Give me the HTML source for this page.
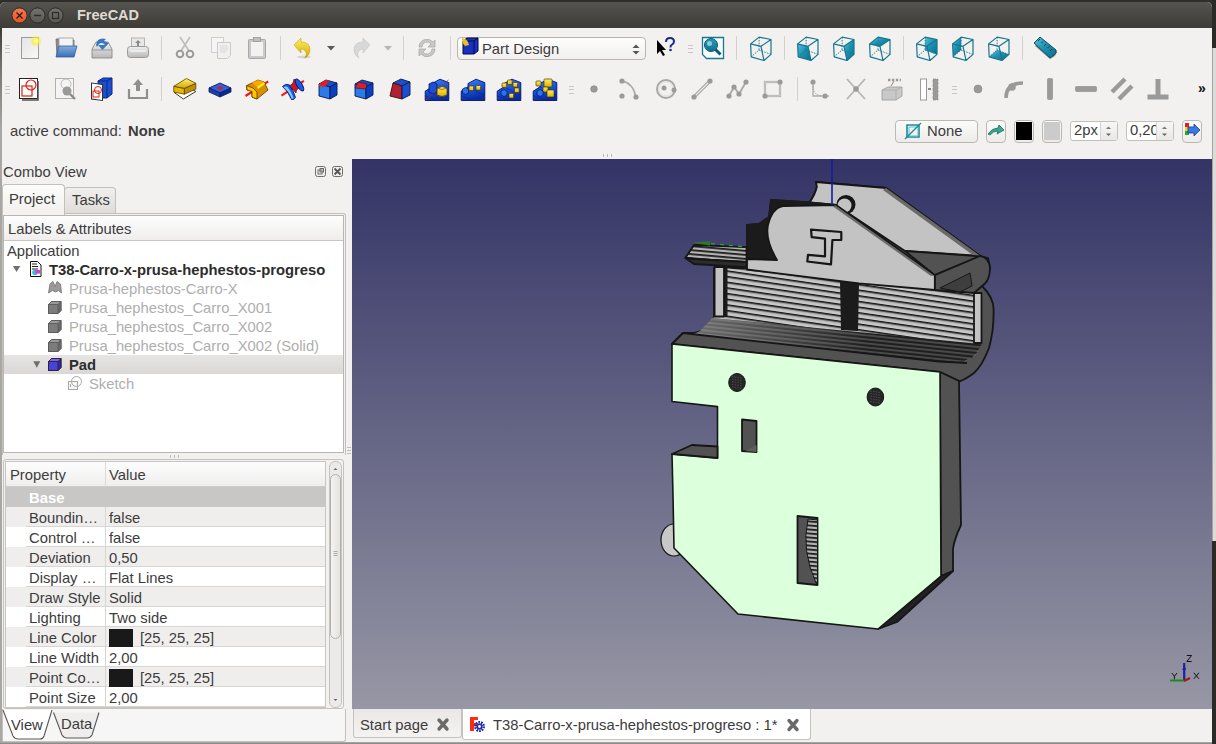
<!DOCTYPE html><html><head><meta charset="utf-8"><style>
*{box-sizing:border-box;margin:0;padding:0}
html,body{width:1216px;height:744px;overflow:hidden;background:#2f2e2b;font-family:"Liberation Sans",sans-serif;color:#3c3c3c}
div,span,svg{position:absolute;display:block}
.t{white-space:nowrap;font-size:14.8px;line-height:19.5px}
.b{font-weight:bold}
.g{color:#aeaeae}
.sep{width:1px;background:#d3d1ce}
.grip{width:5px;height:8px;border-top:1px solid #c9c7c4;border-bottom:1px solid #c9c7c4}
.grip:after{content:"";position:absolute;left:0;top:2px;width:5px;height:1px;background:#c9c7c4}
</style></head><body>
<div style="left:0;top:2px;width:1212px;height:742px;background:#f2f1f0;border-radius:5px 5px 0 0"></div>
<div style="left:0;top:28px;width:2px;height:716px;background:linear-gradient(#3c3b37 0px,#77756f 40px,#a9a7a3 100px,#a9a7a3 716px)"></div>
<div style="left:0;top:2px;width:1212px;height:26px;background:linear-gradient(#55544f,#3c3b37);border-radius:5px 5px 0 0"></div>
<svg style="left:0;top:0" width="80" height="30"><defs><linearGradient id="cg" x1="0" y1="0" x2="0" y2="1"><stop offset="0" stop-color="#f47b55"/><stop offset="1" stop-color="#e8531f"/></linearGradient><linearGradient id="gg" x1="0" y1="0" x2="0" y2="1"><stop offset="0" stop-color="#75746f"/><stop offset="1" stop-color="#57564f"/></linearGradient></defs><circle cx="19.5" cy="15.5" r="7.6" fill="url(#cg)" stroke="#2c2b28" stroke-width="1"/><path d="M16.5 12.5l6 6M22.5 12.5l-6 6" stroke="#2a1a10" stroke-width="1.3"/><circle cx="37.5" cy="15.5" r="7.6" fill="url(#gg)" stroke="#2c2b28" stroke-width="1"/><path d="M34 15.5h7" stroke="#2e2d2a" stroke-width="1.5"/><circle cx="55.5" cy="15.5" r="7.6" fill="url(#gg)" stroke="#2c2b28" stroke-width="1"/><rect x="52.5" y="12.5" width="6" height="6" fill="none" stroke="#2e2d2a" stroke-width="1.3"/></svg>
<span class="t b" style="left:77px;top:6px;color:#dfdbd2;font-size:14.5px">FreeCAD</span>
<div class="grip" style="left:5px;top:45px"></div>
<div class="grip" style="left:5px;top:86px"></div>
<div class="grip" style="left:688px;top:45px"></div>
<div class="grip" style="left:569px;top:86px"></div>
<div class="grip" style="left:952px;top:86px"></div>
<div class="sep" style="left:161px;top:36px;height:24px"></div>
<div class="sep" style="left:280px;top:36px;height:24px"></div>
<div class="sep" style="left:403px;top:36px;height:24px"></div>
<div class="sep" style="left:450px;top:36px;height:24px"></div>
<div class="sep" style="left:736px;top:36px;height:24px"></div>
<div class="sep" style="left:784px;top:36px;height:24px"></div>
<div class="sep" style="left:903px;top:36px;height:24px"></div>
<div class="sep" style="left:1022px;top:36px;height:24px"></div>
<div class="sep" style="left:161px;top:77px;height:24px"></div>
<div class="sep" style="left:797px;top:77px;height:24px"></div>
<div style="left:457px;top:37px;width:189px;height:23px;border:1px solid #b9b5ae;border-radius:4px;background:linear-gradient(#fdfdfc,#f1f0ee)"></div>
<span class="t" style="left:482px;top:40px">Part Design</span>
<svg style="left:630px;top:42px" width="12" height="14"><path d="M2.5 6h7l-3.5-3.5z" fill="#555"/><path d="M2.5 9h7l-3.5 3.5z" fill="#555"/></svg>
<span class="t" style="left:10px;top:122px">active command:</span>
<span class="t b" style="left:128px;top:122px">None</span>
<div style="left:895px;top:120px;width:83px;height:23px;border:1px solid #bcb8b2;border-radius:4px;background:linear-gradient(#fbfbfa,#ecebe9)"></div>
<span class="t" style="left:927px;top:122px">None</span>
<div style="left:986px;top:120px;width:20px;height:23px;border:1px solid #bcb8b2;border-radius:4px;background:linear-gradient(#fbfbfa,#ecebe9)"></div>
<div style="left:1014px;top:120px;width:20px;height:23px;border:1px solid #bcb8b2;border-radius:4px;background:linear-gradient(#fbfbfa,#ecebe9)"></div>
<div style="left:1016px;top:122px;width:16px;height:18px;background:#000"></div>
<div style="left:1042px;top:120px;width:20px;height:23px;border:1px solid #bcb8b2;border-radius:4px;background:linear-gradient(#fbfbfa,#ecebe9)"></div>
<div style="left:1044px;top:122px;width:16px;height:18px;background:#cbcbcb"></div>
<div style="left:1070px;top:121px;width:48px;height:20px;border:1px solid #c3bfb9;border-radius:3px;background:#fff"></div><div style="left:1100px;top:122px;width:17px;height:18px;border-left:1px solid #d6d3cf;background:linear-gradient(#f7f7f6,#e9e8e6)"></div><svg style="left:1103px;top:124px" width="11" height="14"><path d="M3 5h5l-2.5-2.5z" fill="#777"/><path d="M3 9.5h5l-2.5 2.5z" fill="#666"/></svg><span class="t" style="left:1074px;top:121px;width:26px;overflow:hidden">2px</span>
<div style="left:1126px;top:121px;width:48px;height:20px;border:1px solid #c3bfb9;border-radius:3px;background:#fff"></div><div style="left:1156px;top:122px;width:17px;height:18px;border-left:1px solid #d6d3cf;background:linear-gradient(#f7f7f6,#e9e8e6)"></div><svg style="left:1159px;top:124px" width="11" height="14"><path d="M3 5h5l-2.5-2.5z" fill="#777"/><path d="M3 9.5h5l-2.5 2.5z" fill="#666"/></svg><span class="t" style="left:1130px;top:121px;width:26px;overflow:hidden">0,20</span>
<div style="left:1182px;top:120px;width:20px;height:23px;border:1px solid #bcb8b2;border-radius:4px;background:linear-gradient(#fbfbfa,#ecebe9)"></div>
<span class="t" style="left:3px;top:163px">Combo View</span>
<svg style="left:314px;top:165px" width="30" height="13"><rect x="1.5" y="1.5" width="10" height="10" rx="2" fill="none" stroke="#6e6c68"/><rect x="4" y="5" width="4" height="4" fill="none" stroke="#6e6c68"/><rect x="6" y="3.5" width="3.5" height="3.5" fill="none" stroke="#6e6c68"/><rect x="18.5" y="1.5" width="10" height="10" rx="2" fill="none" stroke="#6e6c68"/><path d="M20.5 3.5l6 6M26.5 3.5l-6 6" stroke="#5a5854" stroke-width="2"/></svg>
<div style="left:2px;top:184px;width:63px;height:31px;border:1px solid #c3bfba;border-bottom:none;border-radius:4px 4px 0 0;background:linear-gradient(#fcfcfb,#f1f0ef)"></div>
<span class="t" style="left:9px;top:190px">Project</span>
<div style="left:64px;top:187px;width:52px;height:27px;border:1px solid #c3bfba;border-bottom:none;border-radius:4px 4px 0 0;background:linear-gradient(#f0efed,#dedcd9)"></div>
<span class="t" style="left:72px;top:190.5px">Tasks</span>
<div style="left:2px;top:213px;width:344px;height:242px;border:1px solid #c4c0bb;border-bottom:none;border-radius:0 3px 0 0"></div>
<div style="left:3px;top:215px;width:341px;height:238px;border:1px solid #b9b5b0;background:#fff"></div>
<div style="left:3px;top:213px;width:61px;height:2px;background:#f3f2f1"></div>
<div style="left:4px;top:216px;width:339px;height:25px;border-bottom:1px solid #c9c6c2;background:linear-gradient(#fdfdfd,#efeeed)"></div>
<span class="t" style="left:8px;top:220px">Labels &amp; Attributes</span>
<div style="left:4px;top:355px;width:339px;height:19px;background:linear-gradient(#e6e5e3,#d9d8d6)"></div>
<span class="t " style="left:7px;top:242px;">Application</span>
<span class="t b" style="left:49px;top:261px;color:#2c2c2c">T38-Carro-x-prusa-hephestos-progreso</span>
<span class="t g" style="left:69px;top:280px;">Prusa-hephestos-Carro-X</span>
<span class="t g" style="left:69px;top:299px;">Prusa_hephestos_Carro_X001</span>
<span class="t g" style="left:69px;top:318px;">Prusa_hephestos_Carro_X002</span>
<span class="t g" style="left:69px;top:337px;">Prusa_hephestos_Carro_X002 (Solid)</span>
<span class="t b" style="left:69px;top:356px;color:#2c2c2c">Pad</span>
<span class="t g" style="left:89px;top:375px;">Sketch</span>
<svg style="left:10px;top:262px" width="40" height="120"><path d="M2.8 4h7.5l-3.75 6z" fill="#6f6f6f"/><path d="M23.3 99.3h7l-3.5 6.4z" fill="#6f6f6f"/></svg>
<svg style="left:0;top:0" width="100" height="400"><path d="M30.5 261.5h7l3.5 3.5v11.5h-10.5z" fill="#fff" stroke="#111"/><path d="M32 264h5M32 266.5h6M32 269h6" stroke="#222"/><circle cx="35" cy="272.5" r="2.8" fill="#30c0d8"/><rect x="35.5" y="270" width="4.5" height="3.5" fill="#d040e0"/><path d="M48.5 293l1.5-9 3-2.5 2 5 2-5 3.5 2.5 1 9-3-2.5-3 1.5-3-1.5z" fill="#9a9a9a" stroke="#707070" stroke-width="0.8"/><path d="M48.5 304.5l3-3h9.5v9l-3 3h-9.5z" fill="#7c7c7c" stroke="#5a5a5a" stroke-width="0.9"/><path d="M48.5 304.5l3-3h9.5l-3 3z" fill="#9a9a9a"/><path d="M58 304.5l3-3v9l-3 3z" fill="#6a6a6a"/><path d="M48.5 304.5l3-3h9.5v9l-3 3h-9.5zM48.5 304.5h9.5v9M58 304.5l3-3" fill="none" stroke="#5a5a5a" stroke-width="0.9"/><path d="M48.5 323.5l3-3h9.5v9l-3 3h-9.5z" fill="#7c7c7c" stroke="#5a5a5a" stroke-width="0.9"/><path d="M48.5 323.5l3-3h9.5l-3 3z" fill="#9a9a9a"/><path d="M58 323.5l3-3v9l-3 3z" fill="#6a6a6a"/><path d="M48.5 323.5l3-3h9.5v9l-3 3h-9.5zM48.5 323.5h9.5v9M58 323.5l3-3" fill="none" stroke="#5a5a5a" stroke-width="0.9"/><path d="M48.5 342.5l3-3h9.5v9l-3 3h-9.5z" fill="#7c7c7c" stroke="#5a5a5a" stroke-width="0.9"/><path d="M48.5 342.5l3-3h9.5l-3 3z" fill="#9a9a9a"/><path d="M58 342.5l3-3v9l-3 3z" fill="#6a6a6a"/><path d="M48.5 342.5l3-3h9.5v9l-3 3h-9.5zM48.5 342.5h9.5v9M58 342.5l3-3" fill="none" stroke="#5a5a5a" stroke-width="0.9"/><path d="M48.5 361.5l3-3h9.5v9l-3 3h-9.5z" fill="#4444d8" stroke="#3a1a30" stroke-width="0.9"/><path d="M48.5 361.5l3-3h9.5l-3 3z" fill="#6a6ae8"/><path d="M58 361.5l3-3v9l-3 3z" fill="#2a2ab0"/><path d="M48.5 361.5l3-3h9.5v9l-3 3h-9.5zM48.5 361.5h9.5v9M58 361.5l3-3" fill="none" stroke="#3a1a30" stroke-width="0.9"/><rect x="68.5" y="381.5" width="9" height="8" fill="#f6f6f6" stroke="#a8a8a8"/><circle cx="76.5" cy="381.5" r="5" fill="none" stroke="#a8a8a8"/><path d="M70.5 384v3" stroke="#a8a8a8"/></svg>
<div style="left:170px;top:455px;width:9px;height:3px;border-left:1px solid #bbb;border-right:1px solid #bbb"></div><div style="left:174px;top:455px;width:1px;height:3px;background:#bbb"></div>
<div style="left:603px;top:154px;width:9px;height:3px;border-left:1px solid #bbb;border-right:1px solid #bbb"></div><div style="left:607px;top:154px;width:1px;height:3px;background:#bbb"></div>
<div style="left:347px;top:447px;width:4px;height:7px;border-top:1px solid #bbb;border-bottom:1px solid #bbb"></div><div style="left:347px;top:450px;width:4px;height:1px;background:#bbb"></div>
<div style="left:3px;top:459px;width:341px;height:250px;border:1px solid #c6c2bd;border-radius:3px;background:#f2f1f0"></div>
<div style="left:5px;top:461px;width:321px;height:247px;border:1px solid #c9c6c2;background:#fff"></div>
<div style="left:6px;top:462px;width:319px;height:25px;border-bottom:1px solid #cfccc8;background:linear-gradient(#fdfdfd,#efeeed)"></div>
<div style="left:105px;top:462px;width:1px;height:25px;background:#dcdad6"></div>
<span class="t" style="left:10px;top:466px">Property</span>
<span class="t" style="left:109px;top:466px">Value</span>
<div style="left:6px;top:487px;width:319px;height:20px;background:#c8c7c6"></div>
<span class="t b" style="left:29px;top:489px;color:#fff">Base</span>
<div style="left:6px;top:507px;width:319px;height:20px;background:#efeeed"></div>
<div style="left:26px;top:526px;width:299px;height:1px;background:#d8d6d3"></div>
<div style="left:105px;top:507px;width:1px;height:20px;background:#d8d6d3"></div>
<span class="t" style="left:29px;top:509px">Boundin…</span>
<span class="t" style="left:109px;top:509px">false</span>
<div style="left:6px;top:527px;width:319px;height:20px;background:#ffffff"></div>
<div style="left:26px;top:546px;width:299px;height:1px;background:#d8d6d3"></div>
<div style="left:105px;top:527px;width:1px;height:20px;background:#d8d6d3"></div>
<span class="t" style="left:29px;top:529px">Control …</span>
<span class="t" style="left:109px;top:529px">false</span>
<div style="left:6px;top:547px;width:319px;height:20px;background:#efeeed"></div>
<div style="left:26px;top:566px;width:299px;height:1px;background:#d8d6d3"></div>
<div style="left:105px;top:547px;width:1px;height:20px;background:#d8d6d3"></div>
<span class="t" style="left:29px;top:549px">Deviation</span>
<span class="t" style="left:109px;top:549px">0,50</span>
<div style="left:6px;top:567px;width:319px;height:20px;background:#ffffff"></div>
<div style="left:26px;top:586px;width:299px;height:1px;background:#d8d6d3"></div>
<div style="left:105px;top:567px;width:1px;height:20px;background:#d8d6d3"></div>
<span class="t" style="left:29px;top:569px">Display …</span>
<span class="t" style="left:109px;top:569px">Flat Lines</span>
<div style="left:6px;top:587px;width:319px;height:20px;background:#efeeed"></div>
<div style="left:26px;top:606px;width:299px;height:1px;background:#d8d6d3"></div>
<div style="left:105px;top:587px;width:1px;height:20px;background:#d8d6d3"></div>
<span class="t" style="left:29px;top:589px">Draw Style</span>
<span class="t" style="left:109px;top:589px">Solid</span>
<div style="left:6px;top:607px;width:319px;height:20px;background:#ffffff"></div>
<div style="left:26px;top:626px;width:299px;height:1px;background:#d8d6d3"></div>
<div style="left:105px;top:607px;width:1px;height:20px;background:#d8d6d3"></div>
<span class="t" style="left:29px;top:609px">Lighting</span>
<span class="t" style="left:109px;top:609px">Two side</span>
<div style="left:6px;top:627px;width:319px;height:20px;background:#efeeed"></div>
<div style="left:26px;top:646px;width:299px;height:1px;background:#d8d6d3"></div>
<div style="left:105px;top:627px;width:1px;height:20px;background:#d8d6d3"></div>
<span class="t" style="left:29px;top:629px">Line Color</span>
<div style="left:109px;top:629px;width:24px;height:18px;background:#191919"></div>
<span class="t" style="left:140px;top:629px">[25, 25, 25]</span>
<div style="left:6px;top:647px;width:319px;height:20px;background:#ffffff"></div>
<div style="left:26px;top:666px;width:299px;height:1px;background:#d8d6d3"></div>
<div style="left:105px;top:647px;width:1px;height:20px;background:#d8d6d3"></div>
<span class="t" style="left:29px;top:649px">Line Width</span>
<span class="t" style="left:109px;top:649px">2,00</span>
<div style="left:6px;top:667px;width:319px;height:20px;background:#efeeed"></div>
<div style="left:26px;top:686px;width:299px;height:1px;background:#d8d6d3"></div>
<div style="left:105px;top:667px;width:1px;height:20px;background:#d8d6d3"></div>
<span class="t" style="left:29px;top:669px">Point Co…</span>
<div style="left:109px;top:669px;width:24px;height:18px;background:#191919"></div>
<span class="t" style="left:140px;top:669px">[25, 25, 25]</span>
<div style="left:6px;top:687px;width:319px;height:20px;background:#ffffff"></div>
<div style="left:26px;top:706px;width:299px;height:1px;background:#d8d6d3"></div>
<div style="left:105px;top:687px;width:1px;height:20px;background:#d8d6d3"></div>
<span class="t" style="left:29px;top:689px">Point Size</span>
<span class="t" style="left:109px;top:689px">2,00</span>
<div style="left:329px;top:461px;width:13px;height:247px;border:1px solid #c6c2bd;border-radius:6px;background:#ebeae8"></div>
<div style="left:330px;top:474px;width:11px;height:165px;border:1px solid #b4b0aa;border-radius:6px;background:linear-gradient(90deg,#f4f3f2,#e4e2df)"></div>
<svg style="left:329px;top:461px" width="13" height="247"><path d="M4.5 9l2-2 2 2z" fill="#666"/><path d="M4.5 238l2 2 2-2z" fill="#666"/><path d="M4.5 90.5h4M4.5 92.5h4M4.5 94.5h4" stroke="#9a9a9a" stroke-width="0.8"/></svg>
<div style="left:2px;top:709px;width:344px;height:33px;border:1px solid #c4c0bb;border-top:none;border-radius:0 0 3px 0;background:#f6f6f6;z-index:0"></div>
<svg style="left:0;top:707px" width="110" height="37"><path d="M3 3 L13 29 Q15 32 18 32 H40 Q43 32 44 29 L52 3" fill="#fff" stroke="#5a5854" stroke-width="1.1"/><path d="M53.5 5.5 L62 28 Q64 31 67 31 H87 Q90 31 92 28 L99 5.5" fill="#efeeed" stroke="#5a5854" stroke-width="1.1"/></svg>
<span class="t" style="left:11px;top:716px">View</span>
<span class="t" style="left:61px;top:715px">Data</span>
<div style="left:352px;top:159px;width:860px;height:550px;background:linear-gradient(#333366,#9797a5)"></div>
<svg style="left:352px;top:159px" width="860" height="550" viewBox="352 159 860 550"><defs>
<pattern id="stripes" patternUnits="userSpaceOnUse" width="400" height="5.6" patternTransform="rotate(8.3)">
<rect width="400" height="5.6" fill="#c8c8c8"/><rect y="0" width="400" height="1.7" fill="#161616"/><rect y="1.7" width="400" height="1.3" fill="#a6a6a6"/></pattern>
<linearGradient id="dgrad" x1="0" y1="0" x2="1" y2="0"><stop offset="0" stop-color="#b0b0b0" stop-opacity="0.55"/><stop offset="0.35" stop-color="#a0a0a0" stop-opacity="0.25"/><stop offset="0.6" stop-color="#a0a0a0" stop-opacity="0"/></linearGradient>
<pattern id="dstripes" patternUnits="userSpaceOnUse" width="200" height="4" patternTransform="rotate(6)">
<rect width="200" height="4" fill="#1f1f1f"/><rect y="2.5" width="200" height="0.9" fill="#7a7a7a"/></pattern>
<pattern id="rstripes" patternUnits="userSpaceOnUse" width="400" height="4" patternTransform="rotate(5)">
<rect width="400" height="4" fill="#b4b4b4"/><rect width="400" height="1.8" fill="#1c1c1c"/></pattern>
</defs><path d="M672,344 L683,333 L694,333 L707,329 L714,317 L714,268 L746,268 L747,258 L747,225 L759,224 L769,217 L771,200 L809.5,202.4 Q815,195 816.9,186.8 L816,182 L886,188 L980,256 L988,258 L990,268 L987,281 L982,286 Q994,298 993.6,310 Q994,330 989,348 Q982,366 974,373 Q966,379 959.6,381.4 L940,372 Z" fill="#525252" stroke="#161616" stroke-width="1.8" stroke-linejoin="round" /><path d="M724,268 L840,281 L859,283 L974,293 L982,343 Q978,352 973,357 Q957,365 939,370 L694,334 L707,329 L714,317 L724,317 Z" fill="url(#stripes)" stroke="none" stroke-width="1.8" stroke-linejoin="round" /><path d="M700,331 L712,318 L982,344 Q978,352 973,357 Q957,365 939,370 L694,334 Z" fill="url(#dstripes)" stroke="none" stroke-width="1.8" stroke-linejoin="round" /><path d="M700,331 L712,318 L982,344 Q978,352 973,357 Q957,365 939,370 L694,334 Z" fill="url(#dgrad)" stroke="none" stroke-width="1.8" stroke-linejoin="round" /><path d="M724,268 L727.5,268 L727.5,317 L724,317 Z" fill="#1b1b1b" stroke="none" stroke-width="1.8" stroke-linejoin="round" /><path d="M840,281 L859,283 L858,331 L841,330 Z" fill="#1b1b1b" stroke="none" stroke-width="1.8" stroke-linejoin="round" /><path d="M940,372 L672,344 L683,333 L700,335 L939,361.5 L967,363" fill="#525252" stroke="#161616" stroke-width="1.8" stroke-linejoin="round" /><path d="M974,293 L981.5,293 L981.5,343 L974,343 Z" fill="#c3c3c3" stroke="#161616" stroke-width="1.8" stroke-linejoin="round" /><path d="M714.6,267 L724,267 L724,316.5 L714.6,316.5 Z" fill="#c3c3c3" stroke="#161616" stroke-width="1.8" stroke-linejoin="round" /><path d="M816,182 L886,188 L980.5,256 L905,251 L836,205 L809.5,202.4 Q815,195 816.9,186.8 Z" fill="#c3c3c3" stroke="#161616" stroke-width="1.8" stroke-linejoin="round" /><path d="M886,188 L980.5,256 L977,258 L883,190 Z" fill="#6a6a6a" stroke="none" stroke-width="1.8" stroke-linejoin="round" /><circle cx="846" cy="204.5" r="9.5" fill="#161616"/><circle cx="844.5" cy="205.5" r="7" fill="#c3c3c3"/><path d="M905,251 L980,256.3 L934.8,275.2 Z" fill="#525252" stroke="#161616" stroke-width="1.8" stroke-linejoin="round" /><path d="M934.8,275.2 L980,256 Q989,257 990,268 Q990,281 982,286 L974,293 L934.8,290 Z" fill="#525252" stroke="#161616" stroke-width="1.8" stroke-linejoin="round" /><path d="M940,288 L970,273 L972,286 L960,292 Z" fill="#3e3e3e" stroke="#161616" stroke-width="1" stroke-linejoin="round" /><path d="M771,200 L809.5,202.4 L836,205 L800,212 L780,240 L777,261 L747,258 L747,225 L759,224 L769,217 Z" fill="#1b1b1b" stroke="#1b1b1b" stroke-width="1.8" stroke-linejoin="round" /><path d="M783,206 L836,205 L934.8,275.2 L934.8,290 L859,283.3 L747,269.5 L747,259 L777,260 Q765,240 768,225 Q772,208 783,206 Z" fill="#c3c3c3" stroke="#161616" stroke-width="1.8" stroke-linejoin="round" /><path d="M836,205 L934.8,275.2 L931,276 L833,206.5 Z" fill="#6a6a6a" stroke="none" stroke-width="1.8" stroke-linejoin="round" /><path d="M836,205 L934.8,275.2" fill="none" stroke="#161616" stroke-width="1.2" stroke-linejoin="round" /><path d="M811,229.7 L841.3,232 L841.3,240 L832.4,240 L831,264.4 L807.3,261.5 L808,254.8 L825,256.3 L825,238.6 L811.7,237.1 Z" fill="#c3c3c3" stroke="#161616" stroke-width="2.2" stroke-linejoin="round" /><path d="M685.3,258 L694,245 L746.5,247.2 L746.5,262 L694,259 Z" fill="url(#rstripes)" stroke="#161616" stroke-width="1.8" stroke-linejoin="round" /><path d="M685.3,258 L694,259 L746.5,262 L746.5,267.2 L694,264 Z" fill="#2c2c2c" stroke="#161616" stroke-width="1.8" stroke-linejoin="round" /><path d="M692,242.4 L710.3,241.3 L710,245.5 Z" fill="#2a7a2a" stroke="none" stroke-width="1.8" stroke-linejoin="round" /><path d="M711,243.6 L745,246.8" fill="none" stroke="#22aa22" stroke-width="1.3" stroke-linejoin="round" stroke-dasharray="4 5"/><ellipse cx="674" cy="540" rx="13" ry="16" fill="#c8c8c8" stroke="#161616" stroke-width="1.2"/><path d="M940,372 L959,381 L961,525 Q954,540 953,549 L953,571 L941,576 Z" fill="#525252" stroke="#161616" stroke-width="1.8" stroke-linejoin="round" /><path d="M941,576 L953,571 L897,622 L878,629 Z" fill="#222" stroke="#161616" stroke-width="1.8" stroke-linejoin="round" /><path d="M672,344 L940,372 L941,576 L878,629 L738,614 L674,548 L673,496 L672,454 L717.5,458 L717.5,406.6 L672,401.5 Z" fill="#dcffdc" stroke="#161616" stroke-width="1.6" stroke-linejoin="round" /><path d="M672,454 L692,445 L717.5,446.5 L717.5,458 Z" fill="#525252" stroke="#161616" stroke-width="1.8" stroke-linejoin="round" /><ellipse cx="737" cy="382.5" rx="8.3" ry="9" fill="#262626" stroke="#161616" stroke-width="1"/><path d="M732,376.5 L742,378.1" stroke="#5a5a5a" stroke-width="0.7" stroke-dasharray="1.5 1.2"/><path d="M732,379.09999999999997 L742,380.7" stroke="#5a5a5a" stroke-width="0.7" stroke-dasharray="1.5 1.2"/><path d="M732,381.7 L742,383.3" stroke="#5a5a5a" stroke-width="0.7" stroke-dasharray="1.5 1.2"/><path d="M732,384.3 L742,385.90000000000003" stroke="#5a5a5a" stroke-width="0.7" stroke-dasharray="1.5 1.2"/><path d="M732,386.9 L742,388.5" stroke="#5a5a5a" stroke-width="0.7" stroke-dasharray="1.5 1.2"/><ellipse cx="875.4" cy="397" rx="8.3" ry="9" fill="#262626" stroke="#161616" stroke-width="1"/><path d="M870.4,391.0 L880.4,392.6" stroke="#5a5a5a" stroke-width="0.7" stroke-dasharray="1.5 1.2"/><path d="M870.4,393.59999999999997 L880.4,395.2" stroke="#5a5a5a" stroke-width="0.7" stroke-dasharray="1.5 1.2"/><path d="M870.4,396.2 L880.4,397.8" stroke="#5a5a5a" stroke-width="0.7" stroke-dasharray="1.5 1.2"/><path d="M870.4,398.8 L880.4,400.40000000000003" stroke="#5a5a5a" stroke-width="0.7" stroke-dasharray="1.5 1.2"/><path d="M870.4,401.4 L880.4,403.0" stroke="#5a5a5a" stroke-width="0.7" stroke-dasharray="1.5 1.2"/><path d="M742,419.5 L756.5,421 L756.5,452 L742,451 Z" fill="#525252" stroke="#161616" stroke-width="1.8" stroke-linejoin="round" /><path d="M745,451 L756.5,445 L756.5,452 Z" fill="#5e5e5e" stroke="none" stroke-width="1.8" stroke-linejoin="round" /><path d="M797.5,516 L817.5,518 L817.5,585 L797.5,583 Z" fill="#525252" stroke="#161616" stroke-width="1.8" stroke-linejoin="round" /><path d="M808,519 Q801,550 816,583 L817.5,583 L817.5,520 Z" fill="url(#rstripes)" stroke="#161616" stroke-width="1" stroke-linejoin="round" /><path d="M832,159 V205" stroke="#1a1aa0" stroke-width="1.6"/></svg>
<svg style="left:1160px;top:650px" width="50" height="40" viewBox="1160 650 50 40"><path d="M1184.2 681V663" stroke="#2020a0" stroke-width="2.2"/><path d="M1182.3 670l1.9-6 1.9 6z" fill="#2020a0"/><path d="M1170 680.5h14" stroke="#1a8a1a" stroke-width="2"/><path d="M1184 681l6-3" stroke="#a01a1a" stroke-width="2.2"/><path d="M1186.8 655.5h4.8l-4.8 6h4.8" fill="none" stroke="#111" stroke-width="1"/><path d="M1171.8 673l2.6 3.2 2.6-3.2M1174.4 676.2v3" fill="none" stroke="#111" stroke-width="1"/><path d="M1193.8 672.8l5.2 6M1199 672.8l-5.2 6" fill="none" stroke="#111" stroke-width="1"/></svg>
<div style="left:352px;top:709px;width:860px;height:35px;background:#f2f1f0"></div>
<div style="left:353px;top:709px;width:109px;height:29px;border:1px solid #c6c2bd;border-top:none;border-radius:0 0 3px 3px;background:linear-gradient(#e9e8e6,#f4f3f2)"></div>
<span class="t" style="left:360px;top:716px">Start page</span>
<div style="left:462px;top:709px;width:349px;height:31px;border:1px solid #c6c2bd;border-top:none;border-radius:0 0 3px 3px;background:#fff"></div>
<span class="t" style="left:493px;top:716px">T38-Carro-x-prusa-hephestos-progreso : 1*</span>
<svg style="left:435px;top:717px" width="370" height="16"><path d="M4 3l8 9M12 3l-8 9" stroke="#6a6a6a" stroke-width="3.4" stroke-linecap="round"/><path d="M354 3.5l8 9M362 3.5l-8 9" stroke="#6a6a6a" stroke-width="3.4" stroke-linecap="round"/></svg>
<svg style="left:469px;top:716px" width="18" height="18"><path d="M1 1h8v3h-4v3h3v3h-3v5h-4z" fill="#ff2a10"/><circle cx="10.5" cy="10.5" r="4.2" fill="none" stroke="#1a2aa8" stroke-width="2.6" stroke-dasharray="1.6 1"/><circle cx="10.5" cy="10.5" r="3" fill="#1a2aa8"/><circle cx="10.5" cy="10.5" r="1.4" fill="#fff"/></svg>
<div style="left:0;top:742px;width:1212px;height:2px;background:linear-gradient(#b3b1ad,#7f7f7f)"></div>
<div style="left:1212px;top:0;width:4px;height:744px;background:#2b2a26"></div>
<div style="left:1212px;top:48px;width:4px;height:493px;background:#dcdbd9;border-left:1px solid #a5a39f"></div>
<svg style="left:0;top:0" width="1" height="1"><defs>
<linearGradient id="gdoc" x1="0" y1="0" x2="1" y2="1"><stop offset="0" stop-color="#e4e4e4"/><stop offset="1" stop-color="#f8f8f8"/></linearGradient>
<linearGradient id="gblue" x1="0" y1="0" x2="0" y2="1"><stop offset="0" stop-color="#86aee0"/><stop offset="1" stop-color="#3a6fb5"/></linearGradient>
<linearGradient id="ggray" x1="0" y1="0" x2="0" y2="1"><stop offset="0" stop-color="#f0f0f0"/><stop offset="1" stop-color="#b8b8b8"/></linearGradient>
<linearGradient id="gyel" x1="0" y1="0" x2="0" y2="1"><stop offset="0" stop-color="#fff06a"/><stop offset="1" stop-color="#d4a800"/></linearGradient>
<linearGradient id="gteal" x1="0" y1="0" x2="0" y2="1"><stop offset="0" stop-color="#2a9ab8"/><stop offset="1" stop-color="#14708c"/></linearGradient>
<linearGradient id="gteal2" x1="0" y1="0" x2="1" y2="1"><stop offset="0" stop-color="#5ac0dc"/><stop offset="0.5" stop-color="#1a8fae"/><stop offset="1" stop-color="#0f6f8a"/></linearGradient>
<linearGradient id="gpat" x1="0" y1="0" x2="0.3" y2="1"><stop offset="0" stop-color="#3a8cff"/><stop offset="0.5" stop-color="#1a56e0"/><stop offset="1" stop-color="#0a2aa0"/></linearGradient>
<linearGradient id="gyc" x1="0" y1="0" x2="0" y2="1"><stop offset="0" stop-color="#fff060"/><stop offset="1" stop-color="#e0b000"/></linearGradient>
<radialGradient id="gsun"><stop offset="0" stop-color="#ffffff"/><stop offset="0.35" stop-color="#fff35a"/><stop offset="1" stop-color="#f5e400" stop-opacity="0"/></radialGradient>
</defs></svg>
<svg style="left:17px;top:35px" width="26" height="26" viewBox="0 0 26 26"><rect x="4.5" y="2.5" width="17" height="21" fill="url(#gdoc)" stroke="#9a9a9a"/><circle cx="19" cy="6" r="6" fill="url(#gsun)"/></svg>
<svg style="left:53px;top:35px" width="26" height="26" viewBox="0 0 26 26"><path d="M3 4h7l1 1h10v16H4z" fill="#8c8c8c" stroke="#6a6a6a" stroke-width="0.8"/><rect x="6" y="3" width="14" height="12" fill="#f4f4f4" stroke="#999" stroke-width="0.8"/><path d="M6 11h18l-3 11H3z" fill="url(#gblue)" stroke="#2f5f9f" stroke-width="0.8"/></svg>
<svg style="left:89px;top:35px" width="26" height="26" viewBox="0 0 26 26"><path d="M3 14l4-7h12l4 7v9H3z" fill="url(#ggray)" stroke="#8a8a8a" stroke-width="0.9"/><path d="M3 15h20" stroke="#999"/><path d="M7 10q1-8 10-6l-2 2 5 2-3 3-2-2q-4-3-7 3" fill="#3b78c4"/><path d="M9 10h9l-4.5 5z" fill="#3b78c4"/></svg>
<svg style="left:125px;top:35px" width="26" height="26" viewBox="0 0 26 26"><rect x="6.5" y="3" width="13" height="10" fill="#e8e8e8" stroke="#a5a5a5" stroke-width="0.8"/><path d="M13 5l3 3h-2v3h-2V8h-2z" fill="#8a8a8a"/><rect x="2.5" y="11.5" width="21" height="11" rx="3" fill="url(#ggray)" stroke="#9a9a9a"/><path d="M5 16h16" stroke="#fff"/></svg>
<svg style="left:172px;top:35px" width="26" height="26" viewBox="0 0 26 26"><path d="M8 2l9 14M18 2l-9 14" stroke="#bdbdbd" stroke-width="1.6"/><circle cx="8" cy="19" r="3.3" fill="none" stroke="#9a9a9a" stroke-width="2"/><circle cx="18" cy="19" r="3.3" fill="none" stroke="#9a9a9a" stroke-width="2"/></svg>
<svg style="left:208px;top:35px" width="26" height="26" viewBox="0 0 26 26"><rect x="3.5" y="2.5" width="12" height="15" fill="#f5f5f5" stroke="#cfcfcf"/><path d="M9.5 7.5h13v13l-3 3h-10z" fill="#f0f0f0" stroke="#c9c9c9"/><path d="M12 11h8M12 13h8M12 15h8M12 17h6" stroke="#d8d8d8"/></svg>
<svg style="left:244px;top:35px" width="26" height="26" viewBox="0 0 26 26"><rect x="4.5" y="4.5" width="17" height="19" rx="1" fill="#c9c9c9" stroke="#a8a8a8"/><rect x="7" y="7" width="12" height="14" fill="#f2f2f2"/><rect x="9.5" y="2.5" width="7" height="4" fill="#bdbdbd" stroke="#999" stroke-width="0.8"/></svg>
<svg style="left:290px;top:35px" width="26" height="26" viewBox="0 0 26 26"><path d="M4 10l7-7v4q9 0 9 8q0 5-5 8q3-5-1-8q-1-1-3-1v4z" fill="url(#gyel)" stroke="#c9a400" stroke-width="0.6"/><ellipse cx="14" cy="22" rx="7" ry="1.5" fill="#000" opacity="0.12"/></svg>
<svg style="left:318px;top:35px" width="26" height="26" viewBox="0 0 26 26"><path d="M9 11h8l-4 4.5z" fill="#5a5a5a"/></svg>
<svg style="left:348px;top:35px" width="26" height="26" viewBox="0 0 26 26"><path d="M22 10l-7-7v4q-9 0-9 8q0 5 5 8q-3-5 1-8q1-1 3-1v4z" fill="#d8d8d8" stroke="#c4c4c4" stroke-width="0.6"/></svg>
<svg style="left:375px;top:35px" width="26" height="26" viewBox="0 0 26 26"><path d="M9 11h8l-4 4.5z" fill="#b5b5b5"/></svg>
<svg style="left:414px;top:35px" width="26" height="26" viewBox="0 0 26 26"><path d="M5 12a8 8 0 0 1 14-5l2-2v7h-7l3-3a5 5 0 0 0-9 3z" fill="#c8c8c8" stroke="#a5a5a5" stroke-width="0.7"/><path d="M21 14a8 8 0 0 1-14 5l-2 2v-7h7l-3 3a5 5 0 0 0 9-3z" fill="#c8c8c8" stroke="#a5a5a5" stroke-width="0.7"/></svg>
<svg style="left:652px;top:35px" width="26" height="26" viewBox="0 0 26 26"><path d="M5 5v14l3-3 3 5 2-1-3-5h4z" fill="#000"/><path d="M14 7q0-4 4-4t4 3.5q0 2-2.5 3.5q-1 .7-1 2.5" fill="none" stroke="#1a2a8a" stroke-width="2"/><circle cx="18.5" cy="15" r="1.3" fill="#1a2a8a"/></svg>
<svg style="left:700px;top:35px" width="26" height="26" viewBox="0 0 26 26"><path d="M2.5 2.5h21v21h-17l-4-4z" fill="#f4fbfd" stroke="#1a7790" stroke-width="1.3"/><circle cx="11" cy="10" r="6.5" fill="url(#gteal)" stroke="#0d5a70"/><circle cx="9.5" cy="8.5" r="2.5" fill="#7fd0e4"/><path d="M15.5 14.5l5 5" stroke="#0d5a70" stroke-width="3"/></svg>
<svg style="left:747px;top:35px" width="26" height="26" viewBox="0 0 26 26"><path d="M3.6,8.9 L12.2,2.1 L24,4.5 L24,19.4 L17,25.5 L4.2,21.8Z M3.6,8.9 L14,11.3 L24,4.5 M14,11.3 L17,25.5" fill="none" stroke="#17758e" stroke-width="1.2" stroke-linejoin="round"/><path d="M12.2,2.1 L12,15 L4.2,21.8 M12,15 L24,19.4" fill="none" stroke="#17758e" stroke-width="0.9" stroke-dasharray="1.6 1.2"/></svg>
<svg style="left:794px;top:35px" width="26" height="26" viewBox="0 0 26 26"><path d="M3.6,8.9 L14,11.3 L17,25.5 L4.2,21.8Z" fill="url(#gteal2)"/><path d="M3.6,8.9 L12.2,2.1 L24,4.5 L24,19.4 L17,25.5 L4.2,21.8Z M3.6,8.9 L14,11.3 L24,4.5 M14,11.3 L17,25.5" fill="none" stroke="#17758e" stroke-width="1.2" stroke-linejoin="round"/><path d="M12.2,2.1 L12,15 L4.2,21.8 M12,15 L24,19.4" fill="none" stroke="#17758e" stroke-width="0.9" stroke-dasharray="1.6 1.2"/></svg>
<svg style="left:830px;top:35px" width="26" height="26" viewBox="0 0 26 26"><path d="M14,11.3 L24,4.5 L24,19.4 L17,25.5Z" fill="url(#gteal2)"/><path d="M3.6,8.9 L12.2,2.1 L24,4.5 L24,19.4 L17,25.5 L4.2,21.8Z M3.6,8.9 L14,11.3 L24,4.5 M14,11.3 L17,25.5" fill="none" stroke="#17758e" stroke-width="1.2" stroke-linejoin="round"/><path d="M12.2,2.1 L12,15 L4.2,21.8 M12,15 L24,19.4" fill="none" stroke="#17758e" stroke-width="0.9" stroke-dasharray="1.6 1.2"/></svg>
<svg style="left:866px;top:35px" width="26" height="26" viewBox="0 0 26 26"><path d="M3.6,8.9 L12.2,2.1 L24,4.5 L14,11.3Z" fill="url(#gteal2)"/><path d="M3.6,8.9 L12.2,2.1 L24,4.5 L24,19.4 L17,25.5 L4.2,21.8Z M3.6,8.9 L14,11.3 L24,4.5 M14,11.3 L17,25.5" fill="none" stroke="#17758e" stroke-width="1.2" stroke-linejoin="round"/><path d="M12.2,2.1 L12,15 L4.2,21.8 M12,15 L24,19.4" fill="none" stroke="#17758e" stroke-width="0.9" stroke-dasharray="1.6 1.2"/></svg>
<svg style="left:913px;top:35px" width="26" height="26" viewBox="0 0 26 26"><path d="M12.2,2.1 L24,4.5 L24,19.4 L12,15Z" fill="url(#gteal2)"/><path d="M3.6,8.9 L12.2,2.1 L24,4.5 L24,19.4 L17,25.5 L4.2,21.8Z M3.6,8.9 L14,11.3 L24,4.5 M14,11.3 L17,25.5" fill="none" stroke="#17758e" stroke-width="1.2" stroke-linejoin="round"/><path d="M12.2,2.1 L12,15 L4.2,21.8 M12,15 L24,19.4" fill="none" stroke="#17758e" stroke-width="0.9" stroke-dasharray="1.6 1.2"/></svg>
<svg style="left:949px;top:35px" width="26" height="26" viewBox="0 0 26 26"><path d="M3.6,8.9 L12.2,2.1 L12,15 L4.2,21.8Z" fill="url(#gteal2)"/><path d="M3.6,8.9 L12.2,2.1 L24,4.5 L24,19.4 L17,25.5 L4.2,21.8Z M3.6,8.9 L14,11.3 L24,4.5 M14,11.3 L17,25.5" fill="none" stroke="#17758e" stroke-width="1.2" stroke-linejoin="round"/><path d="M12.2,2.1 L12,15 L4.2,21.8 M12,15 L24,19.4" fill="none" stroke="#17758e" stroke-width="0.9" stroke-dasharray="1.6 1.2"/></svg>
<svg style="left:985px;top:35px" width="26" height="26" viewBox="0 0 26 26"><path d="M4.2,21.8 L12,15 L24,19.4 L17,25.5Z" fill="url(#gteal2)"/><path d="M3.6,8.9 L12.2,2.1 L24,4.5 L24,19.4 L17,25.5 L4.2,21.8Z M3.6,8.9 L14,11.3 L24,4.5 M14,11.3 L17,25.5" fill="none" stroke="#17758e" stroke-width="1.2" stroke-linejoin="round"/><path d="M12.2,2.1 L12,15 L4.2,21.8 M12,15 L24,19.4" fill="none" stroke="#17758e" stroke-width="0.9" stroke-dasharray="1.6 1.2"/></svg>
<svg style="left:1032px;top:35px" width="26" height="26" viewBox="0 0 26 26"><path d="M3 11l7-7 15 13-2 4-5 3z" fill="#3a3a3a" opacity="0.55"/><path d="M2 8l6-6 16 13q1 3-2 5l-4 3z" fill="url(#gteal2)" stroke="#0b4f63" stroke-width="1"/><path d="M8 4l-2 2M11 6.5l-1.5 1.5M14 9l-2 2M17 11.5l-1.5 1.5M20 14l-2 2" stroke="#0b3a48" stroke-width="1"/></svg>
<svg style="left:16px;top:76px" width="26" height="26" viewBox="0 0 26 26"><rect x="3.5" y="2.5" width="18" height="20" fill="#fff" stroke="#222"/><path d="M22 5v19H6" fill="none" stroke="#555" stroke-width="1.5"/><circle cx="15" cy="9" r="5" fill="none" stroke="#e02010" stroke-width="1.2"/><rect x="6" y="10" width="10" height="10" fill="none" stroke="#e02010" stroke-width="1.2"/></svg>
<svg style="left:52px;top:76px" width="26" height="26" viewBox="0 0 26 26"><rect x="3.5" y="2.5" width="18" height="20" fill="#f4f4f4" stroke="#b0b0b0"/><circle cx="14" cy="8" r="5" fill="none" stroke="#bbb"/><circle cx="15" cy="15" r="4.5" fill="#9a9a9a"/><path d="M18 18l5 5" stroke="#8a8a8a" stroke-width="2.4"/></svg>
<svg style="left:88px;top:76px" width="26" height="26" viewBox="0 0 26 26"><path d="M10 5l5-3h9v16l-5 4h-9z" fill="#1a50d0" stroke="#0a2a80"/><path d="M10 5h9v17M19 5l5-3" fill="none" stroke="#0a2a80"/><rect x="3.5" y="6.5" width="11" height="16" fill="#fff" stroke="#333" transform="skewY(8)"/><circle cx="10" cy="14" r="3.5" fill="none" stroke="#e02010"/><rect x="5" y="15" width="6" height="6" fill="none" stroke="#e02010"/></svg>
<svg style="left:125px;top:76px" width="26" height="26" viewBox="0 0 26 26"><path d="M13 3l5 6h-3v6h-4V9H8z" fill="#8f8f8f"/><path d="M4 13v9h18v-9" fill="none" stroke="#8f8f8f" stroke-width="2.2"/></svg>
<svg style="left:171px;top:76px" width="26" height="26" viewBox="0 0 26 26"><path d="M3.2 16.5L12.4 23 24.8 15.5 15.5 10z" fill="#fff" stroke="#222" stroke-width="0.9"/><path d="M2.8 10.3L13.4 12.4v5.8L2.8 16z" fill="#e8b800" stroke="#5a4000" stroke-width="0.8"/><path d="M13.4 12.4L24.8 7.3v5.8L13.4 18.2z" fill="#c09000" stroke="#5a4000" stroke-width="0.8"/><path d="M2.8 10.3L15.5 2.5l9.3 4.8-11.4 5.1z" fill="url(#gyel)" stroke="#5a4000" stroke-width="0.8"/></svg>
<svg style="left:207px;top:76px" width="26" height="26" viewBox="0 0 26 26"><path d="M2 12l11 5 11-5-11-5z" fill="#3060e0" stroke="#0a1a60" stroke-width="0.9"/><path d="M2 12v4l11 5v-4z" fill="#1a40b0" stroke="#0a1a60" stroke-width="0.8"/><path d="M13 17v4l11-5v-4z" fill="#0a2a90" stroke="#0a1a60" stroke-width="0.8"/><path d="M9 12l4 2 4-2-4-2z" fill="#d02020"/></svg>
<svg style="left:243px;top:76px" width="26" height="26" viewBox="0 0 26 26"><path d="M2.5 20L25.2 5.3" stroke="#ff1010" stroke-width="2.2"/><path d="M3.6 9.6L15 4l6 2 4 8-11 9-5-2v-6l-5-1z" fill="#d89000" stroke="#5a3a00" stroke-width="0.8"/><path d="M9 6.5l6-2.5 6 2-7 5z" fill="#ffa800"/><path d="M14 11l7-5 1 2-7 5z" fill="#ffee20"/><path d="M3.6 9.6l6.4 2.4 4 4v7l-5-2v-5.5l-5-1.5z" fill="#ffc800" stroke="#5a3a00" stroke-width="0.8"/></svg>
<svg style="left:279px;top:76px" width="26" height="26" viewBox="0 0 26 26"><path d="M2.5 19.7L24.9 4.8" stroke="#ff1010" stroke-width="2"/><path d="M10 9q4 1 5-6l7 9q-5 0-5 5z" fill="#c81828" stroke="#3a0008" stroke-width="0.6"/><ellipse cx="20.5" cy="9" rx="2.6" ry="7" transform="rotate(-32 20.5 9)" fill="#1a5ae8" stroke="#001060" stroke-width="0.8"/><path d="M3.5 10.5q3-3 6-2 5 5 7 13-2 3-4 2-4-9-9-13z" fill="#1a60f0" stroke="#001060" stroke-width="0.8"/><path d="M4.5 11q2-1 4 0 4 5 6 11l-1.5 1q-3-8-8.5-12z" fill="#8ad0ff"/></svg>
<svg style="left:315px;top:76px" width="26" height="26" viewBox="0 0 26 26"><path d="M4 8l7-4 11 3-7 4z" fill="#1a50d0" stroke="#0a1a50" stroke-width="0.9"/><path d="M4 8l11 3v12L4 20z" fill="#2a7ae8" stroke="#0a1a50" stroke-width="0.9"/><path d="M15 11l7-4v12l-7 4z" fill="#0a40c0" stroke="#0a1a50" stroke-width="0.9"/><path d="M4 8l7-4 5 1q-5 1-5 6l-7-1z" fill="#e02020"/></svg>
<svg style="left:351px;top:76px" width="26" height="26" viewBox="0 0 26 26"><path d="M4 8l7-4 11 3-7 4z" fill="#1a50d0" stroke="#0a1a50" stroke-width="0.9"/><path d="M4 8l11 3v12L4 20z" fill="#2a7ae8" stroke="#0a1a50" stroke-width="0.9"/><path d="M15 11l7-4v12l-7 4z" fill="#0a40c0" stroke="#0a1a50" stroke-width="0.9"/><path d="M4 12l3-6 9 2-1 5z" fill="#e02020" stroke="#0a1a50" stroke-width="0.6"/></svg>
<svg style="left:387px;top:76px" width="26" height="26" viewBox="0 0 26 26"><path d="M6 7l8-4 9 3-8 4z" fill="#1a50d0" stroke="#0a1a50" stroke-width="0.9"/><path d="M6 7l9 3v13L3 20z" fill="#b02030" stroke="#3a0a10" stroke-width="0.9"/><path d="M15 10l8-4v13l-8 4z" fill="#1a50d0" stroke="#0a1a50" stroke-width="0.9"/></svg>
<svg style="left:424px;top:76px" width="26" height="26" viewBox="0 0 26 26"><path d="M1.2 24.5V15.3L8 11V7.5L16 3.2l8.8 3.4v17.9z" fill="url(#gpat)" stroke="#001660" stroke-width="0.9" stroke-linejoin="round"/><path d="M1.2 15.3L8 11l16.8 8.5M1.2 19.5l12 5" fill="none" stroke="#0a2a90" stroke-width="0.7"/><path d="M5 8l4-2 4 2v8l-4 2-4-2z" fill="#1a50d8" stroke="#001660" stroke-width="0.8"/><path d="M13 12q5-3 10 0v7q-5 3-10 0z" fill="url(#gyc)" stroke="#4a3a00" stroke-width="0.8"/><path d="M13 12q5 3 10 0" fill="none" stroke="#4a3a00" stroke-width="0.6"/><path d="M2 24L24.5 4" stroke="#e02010" stroke-width="0.9" stroke-dasharray="2 1.5"/></svg>
<svg style="left:460px;top:76px" width="26" height="26" viewBox="0 0 26 26"><path d="M1.2 24.5V15.3L8 11V7.5L16 3.2l8.8 3.4v17.9z" fill="url(#gpat)" stroke="#001660" stroke-width="0.9" stroke-linejoin="round"/><path d="M1.2 15.3L8 11l16.8 8.5M1.2 19.5l12 5" fill="none" stroke="#0a2a90" stroke-width="0.7"/><path d="M2.5 13l3-1.5 3 1.5v4l-3 1.5-3-1.5z" fill="#2a70f0" stroke="#001660" stroke-width="0.7"/><rect x="9" y="10" width="4.6" height="4.6" rx="0.8" fill="url(#gyc)" stroke="#4a3a00" stroke-width="0.7"/><rect x="16" y="9.5" width="4.6" height="4.6" rx="0.8" fill="url(#gyc)" stroke="#4a3a00" stroke-width="0.7"/></svg>
<svg style="left:496px;top:76px" width="26" height="26" viewBox="0 0 26 26"><path d="M1.2 24.5V15.3L8 11V7.5L16 3.2l8.8 3.4v17.9z" fill="url(#gpat)" stroke="#001660" stroke-width="0.9" stroke-linejoin="round"/><path d="M1.2 15.3L8 11l16.8 8.5M1.2 19.5l12 5" fill="none" stroke="#0a2a90" stroke-width="0.7"/><rect x="6" y="7" width="4.6" height="4.6" rx="0.8" fill="url(#gyc)" stroke="#4a3a00" stroke-width="0.7"/><rect x="11.5" y="4" width="4.6" height="4.6" rx="0.8" fill="url(#gyc)" stroke="#4a3a00" stroke-width="0.7"/><rect x="17" y="6.5" width="4.6" height="4.6" rx="0.8" fill="url(#gyc)" stroke="#4a3a00" stroke-width="0.7"/><rect x="18.5" y="12" width="4.6" height="4.6" rx="0.8" fill="url(#gyc)" stroke="#4a3a00" stroke-width="0.7"/><rect x="13" y="17.5" width="4.6" height="4.6" rx="0.8" fill="url(#gyc)" stroke="#4a3a00" stroke-width="0.7"/><path d="M5 15l3-1.5 3 1.5v4l-3 1.5-3-1.5z" fill="#2a70f0" stroke="#001660" stroke-width="0.7"/></svg>
<svg style="left:532px;top:76px" width="26" height="26" viewBox="0 0 26 26"><path d="M1.2 24.5V15.3L8 11V7.5L16 3.2l8.8 3.4v17.9z" fill="url(#gpat)" stroke="#001660" stroke-width="0.9" stroke-linejoin="round"/><path d="M1.2 15.3L8 11l16.8 8.5M1.2 19.5l12 5" fill="none" stroke="#0a2a90" stroke-width="0.7"/><rect x="4" y="5" width="5" height="5" rx="0.8" fill="url(#gyc)" stroke="#4a3a00" stroke-width="0.7"/><rect x="12" y="3" width="8" height="8" rx="0.8" fill="url(#gyc)" stroke="#4a3a00" stroke-width="0.7"/><rect x="11" y="11" width="5" height="5" rx="0.8" fill="url(#gyc)" stroke="#4a3a00" stroke-width="0.7"/><rect x="15" y="14" width="7" height="7" rx="0.8" fill="url(#gyc)" stroke="#4a3a00" stroke-width="0.7"/><path d="M5 15l3-1.5 3 1.5v4l-3 1.5-3-1.5z" fill="#2a70f0" stroke="#001660" stroke-width="0.7"/></svg>
<svg style="left:581px;top:76px" width="26" height="26" viewBox="0 0 26 26"><circle cx="13" cy="13" r="3.3" fill="#9a9a9a" stroke="#808080" stroke-width="0.6"/></svg>
<svg style="left:616px;top:76px" width="26" height="26" viewBox="0 0 26 26"><path d="M6 5q11 2 14 16" fill="none" stroke="#a8a8a8" stroke-width="1.6"/><circle cx="6" cy="5" r="2.6" fill="#9a9a9a"/><circle cx="20" cy="21" r="2.6" fill="#9a9a9a"/><circle cx="6" cy="20" r="2.6" fill="#9a9a9a"/></svg>
<svg style="left:653px;top:76px" width="26" height="26" viewBox="0 0 26 26"><circle cx="13" cy="13" r="9" fill="none" stroke="#a8a8a8" stroke-width="2"/><circle cx="13" cy="13" r="7" fill="none" stroke="#e0e0e0" stroke-width="1"/><circle cx="11" cy="12" r="2.5" fill="#9a9a9a"/><circle cx="21" cy="14" r="2.5" fill="#9a9a9a"/></svg>
<svg style="left:689px;top:76px" width="26" height="26" viewBox="0 0 26 26"><path d="M5 21L21 5" stroke="#a0a0a0" stroke-width="3.2"/><path d="M5 21L21 5" stroke="#e8e8e8" stroke-width="1.2"/><circle cx="5" cy="21" r="2.6" fill="#9a9a9a"/><circle cx="21" cy="5" r="2.6" fill="#9a9a9a"/></svg>
<svg style="left:725px;top:76px" width="26" height="26" viewBox="0 0 26 26"><path d="M4 20l5-9 5 7 7-12" fill="none" stroke="#a8a8a8" stroke-width="1.8"/><circle cx="4" cy="20" r="2.6" fill="#9a9a9a"/><circle cx="9" cy="11" r="2.6" fill="#9a9a9a"/><circle cx="14" cy="18" r="2.6" fill="#9a9a9a"/><circle cx="21" cy="6" r="2.6" fill="#9a9a9a"/></svg>
<svg style="left:760px;top:76px" width="26" height="26" viewBox="0 0 26 26"><rect x="5" y="6" width="15" height="14" fill="none" stroke="#a0a0a0" stroke-width="2.2"/><rect x="5" y="6" width="15" height="14" fill="none" stroke="#e8e8e8" stroke-width="0.8"/><circle cx="20" cy="6" r="2.6" fill="#9a9a9a"/><circle cx="5" cy="20" r="2.6" fill="#9a9a9a"/></svg>
<svg style="left:807px;top:76px" width="26" height="26" viewBox="0 0 26 26"><path d="M6 4v16h16" fill="none" stroke="#b0b0b0" stroke-width="1.4"/><path d="M6 10q0 9 9 10" fill="none" stroke="#a0a0a0" stroke-width="1" stroke-dasharray="1.5 1"/><circle cx="6" cy="6" r="2.6" fill="#9a9a9a"/><circle cx="18" cy="20" r="2.6" fill="#9a9a9a"/></svg>
<svg style="left:843px;top:76px" width="26" height="26" viewBox="0 0 26 26"><path d="M4 3l18 20M22 3L4 23" stroke="#b5b5b5" stroke-width="1.8"/><circle cx="13" cy="13" r="2.8" fill="#9a9a9a"/></svg>
<svg style="left:879px;top:76px" width="26" height="26" viewBox="0 0 26 26"><path d="M3 14l6-3h14v9l-6 4H3z" fill="#c8c8c8" stroke="#9a9a9a" stroke-width="0.8"/><path d="M3 14h14v10M17 14l6-3" fill="none" stroke="#aaa" stroke-width="0.8"/><path d="M12 10l3-5" stroke="#8a8a8a"/><path d="M9 4h13" stroke="#9a9a9a" stroke-width="2.4" stroke-dasharray="2.4 1.5"/></svg>
<svg style="left:916px;top:76px" width="26" height="26" viewBox="0 0 26 26"><rect x="4.5" y="3" width="6" height="21" fill="#fff" stroke="#9a9a9a"/><path d="M12 13h3" stroke="#8a8a8a" stroke-width="2"/><rect x="17" y="3" width="5" height="21" fill="#9a9a9a" stroke="#888" stroke-width="0.6" stroke-dasharray="3 1"/></svg>
<svg style="left:965px;top:76px" width="26" height="26" viewBox="0 0 26 26"><circle cx="13" cy="13" r="4" fill="#9a9a9a" stroke="#8a8a8a" stroke-width="0.6"/></svg>
<svg style="left:1001px;top:76px" width="26" height="26" viewBox="0 0 26 26"><path d="M5 22q0-15 17-15" fill="none" stroke="#9a9a9a" stroke-width="3.5"/><circle cx="11" cy="11" r="3.8" fill="#9a9a9a"/></svg>
<svg style="left:1037px;top:76px" width="26" height="26" viewBox="0 0 26 26"><rect x="10.5" y="2.5" width="5" height="21" rx="1" fill="#9a9a9a" stroke="#888" stroke-width="0.6"/></svg>
<svg style="left:1073px;top:76px" width="26" height="26" viewBox="0 0 26 26"><rect x="2.5" y="10.5" width="21" height="5" rx="1" fill="#9a9a9a" stroke="#888" stroke-width="0.6"/></svg>
<svg style="left:1109px;top:76px" width="26" height="26" viewBox="0 0 26 26"><path d="M3 16L16 3M10 23L23 10" stroke="#9a9a9a" stroke-width="4.5"/></svg>
<svg style="left:1145px;top:76px" width="26" height="26" viewBox="0 0 26 26"><rect x="10.5" y="3" width="5" height="17" fill="#9a9a9a"/><rect x="2.5" y="18.5" width="21" height="5" fill="#9a9a9a"/></svg>
<span style="left:1198px;top:80px;font-size:14px;font-weight:bold;color:#111;font-family:Liberation Sans">»</span>
<svg style="left:458px;top:35px" width="26" height="26" viewBox="0 0 26 26"><path d="M5 6l4-3h11v13l-4 3H5z" fill="#1a30c0" stroke="#000a40"/><path d="M5 6h11v13M16 6l4-3" fill="none" stroke="#000a40"/><path d="M4 3q6 1 7 7l-4 1q-3-3-3-8z" fill="#e8c020"/></svg>
<svg style="left:900px;top:118px" width="26" height="26" viewBox="0 0 26 26"><path d="M7 7h12v12H7z" fill="none" stroke="#1a8a9a" stroke-width="1.6"/><path d="M9 9h9v9H9z" fill="none" stroke="#5fc0c8" stroke-width="1"/><path d="M5 21L21 5" stroke="#1a8a9a" stroke-width="1.2"/></svg>
<svg style="left:983px;top:118px" width="26" height="26" viewBox="0 0 26 26"><path d="M5 16q4-6 10-6l1-3 5 5-7 4 1-3q-5 0-8 4z" fill="#3aa890" stroke="#1a6a5a" stroke-width="0.8"/></svg>
<svg style="left:1179px;top:118px" width="26" height="26" viewBox="0 0 26 26"><rect x="6" y="5" width="4" height="4" fill="#e02020"/><rect x="6" y="9" width="4" height="4" fill="#f0d020"/><rect x="6" y="13" width="4" height="4" fill="#20b020"/><path d="M9 9h6V6l6 6-6 6v-3H9z" fill="#3a7ae0" stroke="#1a3a90" stroke-width="0.8"/></svg>
</body></html>
